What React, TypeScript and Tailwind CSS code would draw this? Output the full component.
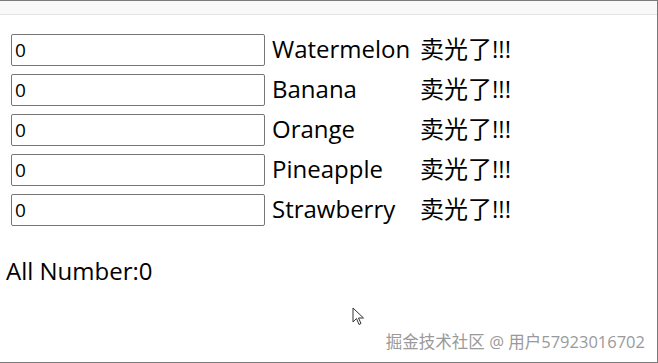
import React, { useState } from 'react'

const FRUITS = ['Watermelon', 'Banana', 'Orange', 'Pineapple', 'Strawberry']

export default function App() {
  const [counts, setCounts] = useState<number[]>(FRUITS.map(() => 0))
  const total = counts.reduce((a, b) => a + b, 0)

  return (
    <div
      className="w-[658px] h-[363px] bg-white border-t border-b border-r border-[#7a7a7a] flex flex-col relative overflow-hidden"
      style={{ fontFamily: '"Open Sans", "Noto Sans CJK SC", sans-serif' }}
    >
      <div className="h-[14px] bg-[#f9f9f9] border-b border-[#e3e3e3] shrink-0" />

      <div className="flex flex-col gap-[8px] pl-[11px] pt-[19px]">
        {FRUITS.map((name, i) => (
          <div key={name} className="flex items-center h-[32px]">
            <input
              className="w-[254px] h-[32px] border border-[#767676] rounded-[2px] px-[3px] text-[19px] text-black outline-none"
              value={counts[i]}
              onChange={(e) => {
                const next = [...counts]
                next[i] = Number(e.target.value) || 0
                setCounts(next)
              }}
            />
            <span className="w-[148px] ml-[7px] mb-[2px] text-[24px] text-black leading-none">{name}</span>
            <span className="mb-[2px] text-[24px] text-black leading-none">卖光了!!!</span>
          </div>
        ))}
      </div>

      <div className="pl-[6px] mt-[27px] text-[24px] text-black">All Number:{total}</div>

      {/* cursor */}
      <svg className="absolute left-[352px] top-[306px]" width="13" height="20" viewBox="0 0 13 20">
        <path d="M1 1 L1 15 L4.5 11.5 L7 17.5 L9 16.5 L6.5 11 L11.5 11 Z" fill="white" stroke="#333" strokeWidth="1" />
      </svg>

      {/* watermark */}
      <div className="absolute right-[12px] bottom-[7px] text-[16.5px] text-[#9a9a9a]"
        style={{ textShadow: '0 0 1px #fff, 0 0 1px #fff' }}>
        掘金技术社区 @ 用户57923016702
      </div>
    </div>
  )
}
